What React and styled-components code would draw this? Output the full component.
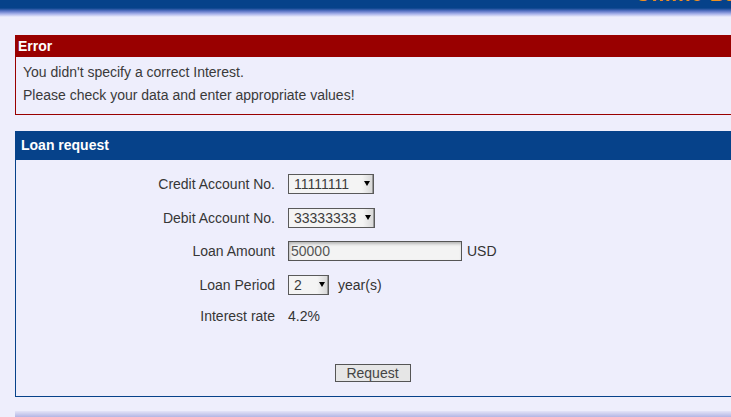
import React from "react";
import styled, { createGlobalStyle } from "styled-components";

const Global = createGlobalStyle`
  html, body { margin: 0; padding: 0; overflow: hidden; }
  body {
    background: #eeeefc;
    font-family: "Liberation Sans", Arial, sans-serif;
    font-size: 14px;
    color: #333;
  }
`;

const Page = styled.div`
  width: 731px;
  height: 417px;
  display: flex;
  flex-direction: column;
  overflow: hidden;
`;

const Header = styled.header`
  height: 17px;
  flex: none;
  background: linear-gradient(to bottom, #06428a 0px, #06428a 8px, #5a73c4 11px, #a9b3ea 14px, #eeeefc 17px);
  display: flex;
  justify-content: flex-start;
  align-items: flex-end;
  padding-left: 635px;
  overflow: hidden;
`;

const Brand = styled.span`
  font-family: "Liberation Sans", Arial, sans-serif;
  font-weight: bold;
  font-size: 20px;
  line-height: 20px;
  color: #f0901e;
  white-space: nowrap;
  margin-bottom: 13px;
  letter-spacing: 1px;
`;

const Main = styled.main`
  flex: 1;
  display: flex;
  flex-direction: column;
  padding: 18px 0 0 15px;
`;

const Box = styled.section`
  width: 717px;
  box-sizing: border-box;
  border: 1px solid ${(p) => p.$color};
  border-top: none;
  margin-bottom: ${(p) => p.$mb || 0}px;
`;

const BoxTitle = styled.h2`
  margin: 0 -1px;
  background: ${(p) => p.$color};
  color: #fff;
  font-size: 14px;
  font-weight: bold;
  height: ${(p) => p.$h}px;
  line-height: ${(p) => p.$h}px;
  padding-left: ${(p) => p.$pl}px;
`;

const ErrorBody = styled.div`
  padding: 4px 7px 7px;
  line-height: 23px;
  color: #3a3a3a;
`;

const FormBody = styled.div`
  display: flex;
  flex-direction: column;
  align-items: center;
  padding: 14px 0 14px;
`;

const Grid = styled.div`
  align-self: stretch;
  display: grid;
  grid-template-columns: 259px 1fr;
  column-gap: 13px;
  row-gap: 13.5px;
  align-items: center;
`;

const Label = styled.div`
  text-align: right;
  color: #363636;
  line-height: 16px;
`;

const Field = styled.div`
  display: flex;
  align-items: center;
  line-height: 16px;
  gap: ${(p) => p.$gap || 5}px;
`;

const Select = styled.div`
  width: ${(p) => p.$w}px;
  height: 20px;
  box-sizing: border-box;
  border: 1px solid #5a5a5a;
  background: #f4f4f4;
  display: flex;
  align-items: stretch;
`;

const SelectValue = styled.span`
  flex: 1;
  padding-left: 5px;
  line-height: 18px;
  color: #3c3c3c;
`;

const Arrow = styled.span`
  width: 10px;
  flex: none;
  background: linear-gradient(to right, #f4f4f4, #d8d8d8);
  border-right: 1px solid #9a9a9a;
  display: flex;
  align-items: center;
  justify-content: center;
  &::after {
    content: "";
    border-left: 3.5px solid transparent;
    border-right: 3.5px solid transparent;
    border-top: 5px solid #000;
    margin-top: -1px;
  }
`;

const Input = styled.div`
  width: 174px;
  height: 20px;
  box-sizing: border-box;
  border: 1px solid #555;
  background: #f3f3f3;
  box-shadow: inset 1px 2px 3px rgba(0, 0, 0, 0.25);
  padding-left: 2px;
  line-height: 18px;
  color: #555;
`;

const Button = styled.button`
  margin-top: 40px;
  margin-left: -2px;
  width: 76px;
  height: 18px;
  padding: 0;
  border: 1px solid #555;
  background: #e6e6e6;
  font-family: "Liberation Sans", Arial, sans-serif;
  font-size: 14px;
  line-height: 16px;
  color: #444;
`;

const Footer = styled.footer`
  height: 6px;
  margin-top: auto;
  background: linear-gradient(to bottom, #e4e4f8, #b4b6e4);
`;

export default function App() {
  return (
    <Page>
      <Global />
      <Header>
        <Brand>Online Banking</Brand>
      </Header>
      <Main>
        <Box $color="#990000" $mb={16}>
          <BoxTitle $color="#990000" $h={22} $pl={3}>Error</BoxTitle>
          <ErrorBody>
            <div>You didn't specify a correct Interest.</div>
            <div>Please check your data and enter appropriate values!</div>
          </ErrorBody>
        </Box>
        <Box $color="#06428a">
          <BoxTitle $color="#06428a" $h={29} $pl={6}>Loan request</BoxTitle>
          <FormBody>
            <Grid>
              <Label>Credit Account No.</Label>
              <Field>
                <Select $w={86}>
                  <SelectValue>11111111</SelectValue>
                  <Arrow />
                </Select>
              </Field>
              <Label>Debit Account No.</Label>
              <Field>
                <Select $w={87}>
                  <SelectValue>33333333</SelectValue>
                  <Arrow />
                </Select>
              </Field>
              <Label>Loan Amount</Label>
              <Field>
                <Input>50000</Input>
                <span>USD</span>
              </Field>
              <Label>Loan Period</Label>
              <Field $gap={9}>
                <Select $w={41}>
                  <SelectValue>2</SelectValue>
                  <Arrow />
                </Select>
                <span>year(s)</span>
              </Field>
              <Label>Interest rate</Label>
              <Field>4.2%</Field>
            </Grid>
            <Button>Request</Button>
          </FormBody>
        </Box>
        <Footer />
      </Main>
    </Page>
  );
}
